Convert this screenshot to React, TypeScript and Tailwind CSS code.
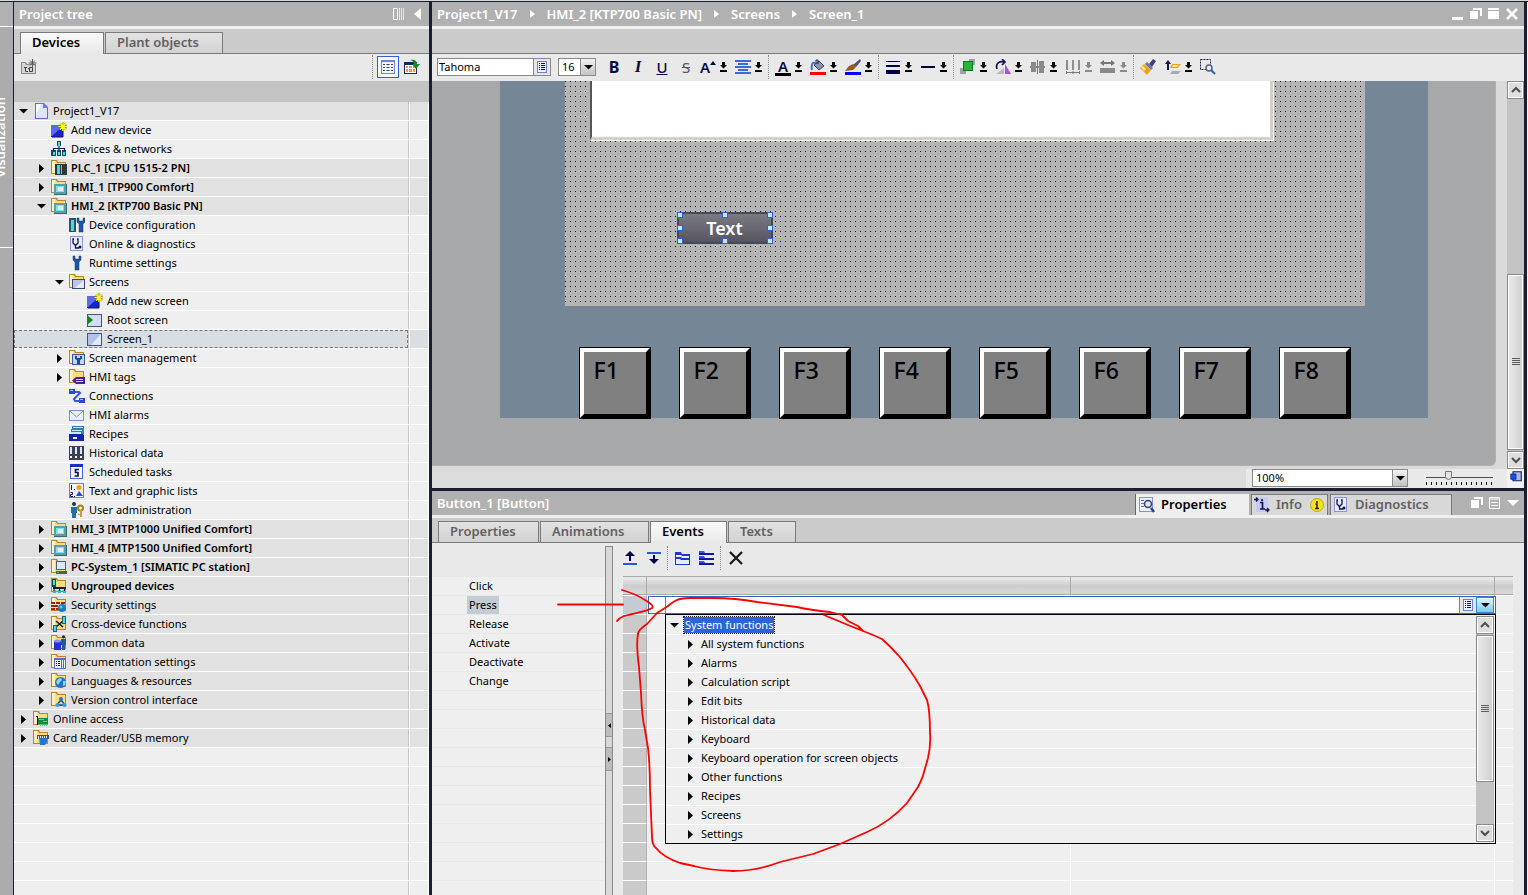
import { useState } from 'react'
import type { ReactNode } from 'react'
import clsx from 'clsx'

const folder = (
  <>
    <path d="M0 14V0h6l1 2h8v12z" fill="#b9852a" />
    <path d="M1 13V1h4l1 2h8v10z" fill="#fcdc80" />
    <path d="M1 13V1h3v12z" fill="#fff0bd" />
  </>
)

const sparkle = (
  <>
    <path d="M12 0v9M7.500 4.500h9M9 1.500l6 6M15 1.500l-6 6" stroke="#8a8800" strokeWidth="2" />
    <path d="M12 0v9M7.500 4.500h9M9 1.500l6 6M15 1.500l-6 6" stroke="#fffb2e" strokeWidth="1.200" />
  </>
)

const wrench = <path d="M4 1v4l2 2v8h4V7l2-2V1l-2 0v3H6V1z" fill="#1c56a8" stroke="#163a74" strokeWidth="0.5" />

const panel = (
  <>
    <path d="M3 5h13v11H3z" fill="#2e6f7a" />
    <path d="M3 5h12v10H3z" fill="#5f9ca8" />
    <path d="M5 7h8v6H5z" fill="#6deaf5" />
    <path d="M7 8h5v4H7z" fill="#e3f3ff" />
  </>
)

const stethoscope = (
  <>
    <path d="M1 0h13v15H1z" fill="#8796d8" />
    <path d="M2 1h11v13H2z" fill="#e6ebfd" />
    <path d="M5 3H4v4l2 2h1l2-2V3H8M6.500 9v3h3l1-1" fill="none" stroke="#11144f" strokeWidth="1.3" />
    <circle cx="11" cy="11" r="1.500" fill="#11144f" />
  </>
)

const ICONS: Record<string, ReactNode> = {
  project: (
    <>
      <path d="M2 0h9l4 4v12H2z" fill="#5e6fc9" />
      <path d="M3 1h7l4 4v10H3z" fill="#dfe6fb" />
      <path d="M3 1h5L3 12z" fill="#fff" />
      <path d="M10 0v5h5z" fill="#6d7fd6" />
    </>
  ),
  addNew: (
    <>
      <path d="M0 3h12v12H0z" fill="#1a22c9" />
      <path d="M0 3h12v1L1 14H0z" fill="#5a68f2" />
      <path d="M12 5v10H1" fill="none" stroke="#0a0d7d" />
      {sparkle}
    </>
  ),
  network: (
    <>
      <path d="M6 0h4v5H6zM0 9h5v6H0zM6 9h4v6H6zM11 9h4v6h-4z" fill="#23464f" />
      <path d="M7 1h2v4H7zM2 11h2v3H2zM7 11h2v3H7zM12 11h2v3h-2z" fill="#3fe0e6" />
      <path d="M8 5v4M2.500 10V7.500h11V10" fill="none" stroke="#10205e" strokeWidth="1.200" />
    </>
  ),
  plc: (
    <>
      {folder}
      <path d="M4 4h12v11H4z" fill="#29383f" />
      <path d="M6 5h3v9H6z" fill="#3fd6e0" />
      <path d="M10 5h1v9h-1z" fill="#9fb0b5" />
    </>
  ),
  hmi: (
    <>
      {folder}
      {panel}
    </>
  ),
  deviceConfig: (
    <>
      <path d="M0 1h7v14H0z" fill="#2b545c" />
      <path d="M2 3h3v11H2z" fill="#35e0ec" />
      <g transform="translate(4 0)">{wrench}</g>
    </>
  ),
  diagnostics: stethoscope,
  wrench,
  screens: (
    <>
      {folder}
      <path d="M3 5h13v10H3z" fill="#3b4a72" />
      <path d="M4 6h11v8H4z" fill="#b9c5ea" />
      <path d="M15 6v8H6z" fill="#e4eafb" />
    </>
  ),
  rootScreen: (
    <>
      <path d="M0 2h15v13H0z" fill="#46527a" />
      <path d="M1 3h13v11H1z" fill="#d5ddf5" />
      <path d="M0 3l6 5-6 5z" fill="#0f8a1c" />
    </>
  ),
  screen: (
    <>
      <path d="M0 2h15v13H0z" fill="#46527a" />
      <path d="M1 3h13v11H1z" fill="#b3c0ea" />
      <path d="M14 3v11H4z" fill="#e2e9fb" />
    </>
  ),
  screenMgmt: (
    <>
      {folder}
      <path d="M3 4h13v11H3z" fill="#3b5a9c" />
      <path d="M4 5h11v9H4z" fill="#c3d3f4" />
      <path d="M6 6v3l2 1v4h3v-4l2-1V6h-2v2H8V6z" fill="#1c4d9c" />
    </>
  ),
  tags: (
    <>
      {folder}
      <path d="M3 11.500l4-3.500h9v7H7z" fill="#4a1f9e" />
      <path d="M7 10.500h7M7 12.500h7" stroke="#d8c6ff" />
    </>
  ),
  connections: (
    <>
      <path d="M0 1h6v5H0zM10 10h6v5h-6z" fill="#2b48c8" />
      <path d="M6 4h4l1 1-6 6 1 2h5" fill="none" stroke="#3558dd" strokeWidth="2" />
      <path d="M1 2h3v1H1zM11 11h3v1h-3z" fill="#a8baff" />
    </>
  ),
  mail: (
    <>
      <path d="M0 3h15v11H0z" fill="#7e8fe0" />
      <path d="M1 4h13v9H1z" fill="#eaf0ff" />
      <path d="M1 4l6.500 6L14 4" fill="none" stroke="#7e8fe0" />
    </>
  ),
  recipes: (
    <>
      <path d="M3 0h12v8H3zM2 3h12v8H2z" fill="#2c7db8" />
      <path d="M4 1h10v1H4zM3 4h10v1H3zM2 6h10v2H2z" fill="#c5edfb" />
      <path d="M0 8h14l1 1v6H0z" fill="#1323b0" />
      <path d="M4 11h4v2H4z" fill="#fff" />
    </>
  ),
  history: (
    <>
      <path d="M0 1h5v14H0zM5 1h5v14H5zM10 1h5v14h-5z" fill="#3c3e54" />
      <path d="M1 2h2v7H1zM6 2h2v7H6zM11 2h2v7h-2z" fill="#dfe3f4" />
      <path d="M1 11h2v2H1zM6 11h2v2H6zM11 11h2v2h-2z" fill="#fff" />
    </>
  ),
  tasks: (
    <>
      <path d="M1 0h13v15H1z" fill="#5266d8" />
      <path d="M2 3h11v11H2z" fill="#f3f5ff" />
      <path d="M1 0h13v3H1z" fill="#1c2fc4" />
      <path d="M10 5.500H6.500v3H9v3.500H5.500" fill="none" stroke="#111450" strokeWidth="1.700" />
    </>
  ),
  lists: (
    <>
      <path d="M0 0h15v15H0z" fill="#6e7fd8" />
      <path d="M1 1h13v13H1z" fill="#eef2ff" />
      <path d="M2.500 2v5M1.500 9.500h2v2h-2v2h2.500M5 6.500h1M5 13.500h1" stroke="#14175a" fill="none" />
      <circle cx="10" cy="4.500" r="2.500" fill="#f29b18" />
      <path d="M7 13l3-5 4 5z" fill="#2a49c8" />
    </>
  ),
  users: (
    <>
      <circle cx="5" cy="2" r="2" fill="#26333f" />
      <path d="M2 5h6v6H7v5H3v-5H2z" fill="#2a6ba8" />
      <circle cx="11.500" cy="6" r="2.500" fill="none" stroke="#a4821a" strokeWidth="2" />
      <path d="M11 8h2v7h-2zM9 12h2v1H9z" fill="#c9a126" />
    </>
  ),
  pc: (
    <>
      {folder}
      <path d="M5 2h10v9H5z" fill="#4e5f7f" />
      <path d="M6 3h8v7H6z" fill="#dde6fa" />
      <path d="M5 12h11v3H5z" fill="#515a66" />
      <path d="M6 13h2v1H6z" fill="#2ddb4a" />
    </>
  ),
  ungrouped: (
    <>
      {folder}
      <path d="M1 1h4v8H1z" fill="#23464f" />
      <path d="M2 2h2v5H2z" fill="#3fe0e6" />
      <path d="M2 9h13v2H2z" fill="#12174f" />
      <path d="M2 12h3v3H2zM7 12h3v3H7zM12 12h3v3h-3z" fill="#37b9c2" />
      <path d="M3 11v2M8.500 11v2M13.500 11v2" stroke="#12174f" />
    </>
  ),
  security: (
    <>
      {folder}
      <path d="M0 5h14v8H0z" fill="#a81f16" />
      <path d="M0 7.500h14M0 10.500h14M4.500 5v3M9.500 5v3M7.500 8v3M4.500 11v2" stroke="#f3dcd2" />
      <circle cx="11" cy="11" r="4" fill="#1c7ac4" />
      <circle cx="10" cy="10" r="1.500" fill="#6cbcf0" />
    </>
  ),
  cross: (
    <>
      {folder}
      <path d="M5 5l7 6M12 5l-7 6" stroke="#111450" strokeWidth="1.600" />
      <path d="M11 0h4v8h-4zM2 9h4v7H2z" fill="#23616b" />
      <path d="M12 1h2v6h-2zM3 10h2v5H3z" fill="#46dbe4" />
    </>
  ),
  common: (
    <>
      {folder}
      <path d="M3 6h7v9H3z" fill="#2036d2" />
      <ellipse cx="6.500" cy="6" rx="3.500" ry="1.500" fill="#8294ff" />
      <circle cx="12.500" cy="1.800" r="1.600" fill="#1d2c44" />
      <path d="M10 4h5v6h-1v5h-3v-5h-1z" fill="#225a96" />
    </>
  ),
  docs: (
    <>
      {folder}
      <path d="M3 4h12v11H3z" fill="#5a6bd0" />
      <path d="M4 6h6v8H4zM11 6h1v8h-1zM13 6h1v8h-1z" fill="#f1f4ff" />
      <path d="M5 7.500h1M7 7.500h2M5 9.500h1M7 9.500h2M5 11.500h1M7 11.500h2" stroke="#14175a" />
    </>
  ),
  languages: (
    <>
      {folder}
      <circle cx="9.500" cy="9.500" r="5.500" fill="#1f74c9" />
      <path d="M7 6l3-1 1 2-2 2-2 3-2-3zM12 8l3 0-1 4-2 1z" fill="#8fd8e8" />
    </>
  ),
  version: (
    <>
      {folder}
      <path d="M10 8l-4 5h8z" fill="none" stroke="#1b4a91" strokeWidth="1.500" />
      <circle cx="10" cy="7" r="2" fill="#2f72c4" />
      <circle cx="6.500" cy="13" r="2" fill="#3f9ae0" />
      <circle cx="13.500" cy="13" r="2" fill="#3f9ae0" />
    </>
  ),
  online: (
    <>
      {folder}
      <path d="M3 5h2v9H4V6H3z" fill="#112233" />
      <path d="M5 7h10v6H5z" fill="#128a45" />
      <path d="M7.500 13v2M9.500 13v2M11.500 13v2M13.500 13v2M6 8.500h5M10 10.500h4" stroke="#59d58a" />
    </>
  ),
  card: (
    <>
      {folder}
      <path d="M4 5h12v4H4z" fill="#40525f" />
      <path d="M5.500 6v3M7.500 6v3M9.500 6v3M11.500 6v3M13.500 6v3" stroke="#e2e8ec" />
      <path d="M6 8h8v4l-2 3H7z" fill="#1b79d4" />
    </>
  ),
}

type Node = { label: string; icon: string; level: number; state?: 'open' | 'closed'; bold?: boolean; shade?: boolean }

const TREE: Node[] = [
  { label: 'Project1_V17', icon: 'project', level: 0, state: 'open', shade: true },
  { label: 'Add new device', icon: 'addNew', level: 1 },
  { label: 'Devices & networks', icon: 'network', level: 1 },
  { label: 'PLC_1 [CPU 1515-2 PN]', icon: 'plc', level: 1, state: 'closed', bold: true, shade: true },
  { label: 'HMI_1 [TP900 Comfort]', icon: 'hmi', level: 1, state: 'closed', bold: true, shade: true },
  { label: 'HMI_2 [KTP700 Basic PN]', icon: 'hmi', level: 1, state: 'open', bold: true, shade: true },
  { label: 'Device configuration', icon: 'deviceConfig', level: 2 },
  { label: 'Online & diagnostics', icon: 'diagnostics', level: 2 },
  { label: 'Runtime settings', icon: 'wrench', level: 2 },
  { label: 'Screens', icon: 'screens', level: 2, state: 'open' },
  { label: 'Add new screen', icon: 'addNew', level: 3 },
  { label: 'Root screen', icon: 'rootScreen', level: 3 },
  { label: 'Screen_1', icon: 'screen', level: 3 },
  { label: 'Screen management', icon: 'screenMgmt', level: 2, state: 'closed' },
  { label: 'HMI tags', icon: 'tags', level: 2, state: 'closed' },
  { label: 'Connections', icon: 'connections', level: 2 },
  { label: 'HMI alarms', icon: 'mail', level: 2 },
  { label: 'Recipes', icon: 'recipes', level: 2 },
  { label: 'Historical data', icon: 'history', level: 2 },
  { label: 'Scheduled tasks', icon: 'tasks', level: 2 },
  { label: 'Text and graphic lists', icon: 'lists', level: 2 },
  { label: 'User administration', icon: 'users', level: 2 },
  { label: 'HMI_3 [MTP1000 Unified Comfort]', icon: 'hmi', level: 1, state: 'closed', bold: true, shade: true },
  { label: 'HMI_4 [MTP1500 Unified Comfort]', icon: 'hmi', level: 1, state: 'closed', bold: true, shade: true },
  { label: 'PC-System_1 [SIMATIC PC station]', icon: 'pc', level: 1, state: 'closed', bold: true, shade: true },
  { label: 'Ungrouped devices', icon: 'ungrouped', level: 1, state: 'closed', bold: true, shade: true },
  { label: 'Security settings', icon: 'security', level: 1, state: 'closed', shade: true },
  { label: 'Cross-device functions', icon: 'cross', level: 1, state: 'closed', shade: true },
  { label: 'Common data', icon: 'common', level: 1, state: 'closed', shade: true },
  { label: 'Documentation settings', icon: 'docs', level: 1, state: 'closed', shade: true },
  { label: 'Languages & resources', icon: 'languages', level: 1, state: 'closed', shade: true },
  { label: 'Version control interface', icon: 'version', level: 1, state: 'closed', shade: true },
  { label: 'Online access', icon: 'online', level: 0, state: 'closed', shade: true },
  { label: 'Card Reader/USB memory', icon: 'card', level: 0, state: 'closed', shade: true },
]

const INDENT = ['pl-px', 'pl-[19px]', 'pl-[37px]', 'pl-[55px]']
const KEYS = ['F1', 'F2', 'F3', 'F4', 'F5', 'F6', 'F7', 'F8']
const EVENTS = ['Click', 'Press', 'Release', 'Activate', 'Deactivate', 'Change']
const FUNCTIONS = [
  'All system functions',
  'Alarms',
  'Calculation script',
  'Edit bits',
  'Historical data',
  'Keyboard',
  'Keyboard operation for screen objects',
  'Other functions',
  'Recipes',
  'Screens',
  'Settings',
]
const HANDLES = [
  'left-0 top-0',
  'left-[45px] top-0',
  'right-0 top-0',
  'left-0 top-[13px]',
  'right-0 top-[13px]',
  'left-0 bottom-0',
  'left-[45px] bottom-0',
  'right-0 bottom-0',
]

function Icon({ children, className = 'h-4 w-4' }: { children: ReactNode; className?: string }) {
  return (
    <svg className={clsx('block shrink-0', className)} viewBox="0 0 16 16" fill="none" aria-hidden="true">
      {children}
    </svg>
  )
}

function Caret({ state }: { state?: 'open' | 'closed' }) {
  return (
    <svg className="h-[9px] w-[9px]" viewBox="0 0 9 9" fill="#000" aria-hidden="true">
      {state === 'open' ? <path d="M0 2h9L4.500 6.500z" /> : <path d="M2 0v9l5-4.500z" />}
    </svg>
  )
}

function ListIcon() {
  return (
    <svg className="h-3 w-[10px]" viewBox="0 0 10 12" aria-hidden="true">
      <path d="M0 0h10v12H0z" fill="#6d7fd8" />
      <path d="M1 1h8v10H1z" fill="#eef1ff" />
      <path d="M2 2.500h1M4 2.500h4M2 4.500h1M4 4.500h4M2 6.500h1M4 6.500h4M2 8.500h1M4 8.500h4" stroke="#11144f" />
    </svg>
  )
}

function Tab({ children, active, className }: { children: ReactNode; active?: boolean; className?: string }) {
  return (
    <button
      type="button"
      role="tab"
      aria-selected={!!active}
      className={clsx(
        'border border-b-0 border-[#7a7a7a] pl-[11px] text-left text-[13px] leading-[18px] font-semibold whitespace-nowrap',
        active
          ? '-mb-px h-[22px] bg-linear-to-b from-[#fafafa] to-[#e9e9e9] pb-[3px] text-black'
          : 'h-[21px] bg-linear-to-b from-[#e2e2e2] to-[#d2d2d2] pb-0.5 text-[#616161]',
        className,
      )}
    >
      {children}
    </button>
  )
}

function ScrollButton({ dir }: { dir: 'up' | 'down' }) {
  return (
    <button
      type="button"
      aria-label={dir === 'up' ? 'Scroll up' : 'Scroll down'}
      className="flex h-[18px] w-full shrink-0 items-center justify-center border border-[#8a8a8a] bg-[#dedede] shadow-[inset_0_0_0_1px_#fff]"
    >
      <svg className="h-2 w-3" viewBox="0 0 12 8" fill="none" stroke="#4d4d4d" strokeWidth="2">
        {dir === 'up' ? <path d="M2 6l4-4 4 4" /> : <path d="M2 2l4 4 4-4" />}
      </svg>
    </button>
  )
}

function Thumb({ className }: { className: string }) {
  return (
    <div
      className={clsx(
        'flex w-full shrink-0 items-center justify-center border border-[#8a8a8a] bg-linear-to-r from-[#ebebeb] to-[#cfcfcf] shadow-[inset_0_0_0_1px_#fff]',
        className,
      )}
    >
      <div className="h-2 w-2 bg-[repeating-linear-gradient(#5c5c5c_0_1px,transparent_1px_2px)]" />
    </div>
  )
}

function Tool({ label, children, className = 'w-5' }: { label: string; children: ReactNode; className?: string }) {
  return (
    <button type="button" aria-label={label} className={clsx('flex h-5 shrink-0 items-center justify-center', className)}>
      {children}
    </button>
  )
}

function SplitTool({ label, children, disabled }: { label: string; children: ReactNode; disabled?: boolean }) {
  return (
    <div className="flex shrink-0">
      <Tool label={label}>{children}</Tool>
      <button type="button" aria-label={label + ' options'} className="flex h-5 w-[10px] items-center justify-center">
        <svg className="h-[10px] w-[7px]" viewBox="0 0 7 10" fill={disabled ? '#8a8a8a' : '#000'}>
          <path d="M2 0h3v3h2L3.500 6.500 0 3h2zM0 8h7v2H0z" />
        </svg>
      </button>
    </div>
  )
}

function ToolGroup({ children }: { children: ReactNode }) {
  return <div className="flex h-6 items-center gap-[5px] border-l border-dotted border-[#8a8a8a] pr-[5px] pl-1">{children}</div>
}

function SelectArrow() {
  return (
    <span className="pointer-events-none absolute inset-y-px right-px flex w-[15px] items-center justify-center border-l border-[#8a8a8a] bg-linear-to-b from-[#f2f2f2] to-[#c4c4c4]">
      <Caret state="open" />
    </span>
  )
}

function ProjectTree() {
  const [selected, setSelected] = useState('Screen_1')

  return (
    <aside className="flex w-[415px] shrink-0 flex-col overflow-hidden">
      <header className="flex h-6 shrink-0 items-center justify-between bg-[#b1b1b1] pr-2 pl-[5px]">
        <h2 className="text-[13px] leading-6 font-semibold text-white">Project tree</h2>
        <div className="flex items-center gap-[9px]">
          <svg className="h-3 w-3" viewBox="0 0 12 12" fill="none">
            <path d="M.5.500h4v11h-4z" stroke="#fff" />
            <path d="M6.500 0v12M8.500 0v12M10.500 0v12" stroke="#e6e6e6" />
          </svg>
          <svg className="h-3 w-[7px]" viewBox="0 0 7 12" fill="#fff">
            <path d="M7 0v12L0 6z" />
          </svg>
        </div>
      </header>
      <div role="tablist" className="flex h-7 shrink-0 items-end gap-px border-t-3 border-b border-t-[#f0f0f0] border-b-[#7a7a7a] bg-[#cbcbcb] pl-1.5">
        <Tab active className="w-[84px]">Devices</Tab>
        <Tab className="w-[118px]">Plant objects</Tab>
      </div>
      <div className="flex h-[27px] shrink-0 items-center bg-[#e9e9e9] pr-2 pb-px pl-[5px]">
        <Tool label="Add new group">
          <Icon>
            <path d="M0 15V3h5l1 2h9v10z" fill="#8a8a8a" />
            <path d="M1 14V4h3l1 2h9v8z" fill="#d6d6d6" />
            <path d="M3 8.500h3M4.500 8v4.500H7M7 9.500h2M8.500 8.500h3v4h-3z" stroke="#444" />
            <path d="M11.500 0v8M7.500 4h8M9 1.500l5 5M14 1.500l-5 5" stroke="#5b5b5b" />
          </Icon>
        </Tool>
        <div className="ml-auto h-6 border-l border-dotted border-[#8a8a8a]" />
        <button type="button" aria-label="Details view" className="ml-1 flex h-[22px] w-[22px] items-center justify-center border border-[#2f5fd0] bg-[#f6f8ff]">
          <Icon>
            <path d="M1 1h14v14H1z" fill="#7284d8" />
            <path d="M2 3h12v11H2z" fill="#f3f5ff" />
            <path d="M3 5.500h2M6.500 5.500h3M11 5.500h2M3 8.500h2M6.500 8.500h3M11 8.500h2M3 11.500h2M6.500 11.500h3M11 11.500h2" stroke="#3a4157" />
          </Icon>
        </button>
        <button type="button" aria-label="Open overview" className="ml-1 flex h-[22px] w-[18px] items-center justify-center">
          <Icon>
            <path d="M0 3h13v12H0z" fill="#14296b" />
            <path d="M1 6h11v8H1z" fill="#fff" />
            <path d="M2 7h2v2H2zM5 7h3v2H5zM9 7h2v2H9zM2 10h2v3H2zM5 10h3v3H5zM9 10h2v3H9z" fill="#ef9a2c" />
            <path d="M6 1c5-1 7 1 7 4h3l-4 5-4-5h2c0-2-1-3-4-4z" fill="#118a2b" />
          </Icon>
        </button>
      </div>
      <div className="h-[21px] shrink-0 bg-[#c3c3c3]" />
      <ul role="tree" className="min-h-0 flex-1 overflow-hidden bg-[#efefef]">
        {TREE.map((node) => {
          const isSelected = node.label === selected
          return (
            <li
              key={node.label}
              role="treeitem"
              aria-selected={isSelected}
              onClick={() => setSelected(node.label)}
              className={clsx('flex h-[19px] border-b border-white', isSelected ? 'bg-[#d8dee2]' : node.shade ? 'bg-[#e1e1e1]' : 'bg-[#efefef]')}
            >
              <div
                className={clsx(
                  'flex flex-1 items-center text-[11px] leading-[18px] whitespace-nowrap text-black',
                  INDENT[node.level],
                  node.bold && 'font-semibold',
                  isSelected && 'outline-1 -outline-offset-1 outline-[#777] outline-dashed',
                )}
              >
                <span className="mr-0.5 flex w-4 justify-center">{node.state && <Caret state={node.state} />}</span>
                <Icon>{ICONS[node.icon]}</Icon>
                <span className="pl-1">{node.label}</span>
              </div>
              <div className="w-[21px] border-l border-[#c6c6c6] shadow-[inset_1px_0_0_#fff,inset_-1px_0_0_#fff]" />
            </li>
          )
        })}
        {Array.from({ length: 10 }, (_, i) => (
          <li key={i} aria-hidden="true" className="flex h-[19px] border-b border-white">
            <div className="ml-auto w-[21px] border-l border-[#c6c6c6] shadow-[inset_1px_0_0_#fff,inset_-1px_0_0_#fff]" />
          </li>
        ))}
      </ul>
    </aside>
  )
}

function FormatBar() {
  return (
    <div className="flex h-[27px] shrink-0 items-center overflow-hidden bg-[#e9e9e9] pb-px pl-[5px]">
      <div className="flex h-[18px] w-[114px] shrink-0 border border-[#8a8a8a] bg-white">
        <input aria-label="Font" defaultValue="Tahoma" className="min-w-0 flex-1 pl-px text-[11px] leading-4 outline-none" />
        <button type="button" aria-label="Choose font" className="flex w-[17px] items-center justify-center border-l border-[#8a8a8a] bg-[#e6e6e6]">
          <ListIcon />
        </button>
      </div>
      <div className="relative mr-1.5 ml-[7px] h-[18px] w-[38px] shrink-0">
        <select aria-label="Font size" defaultValue="16" className="block h-full w-full appearance-none border border-[#8a8a8a] bg-white pl-[3px] text-[11px] leading-4">
          <option>16</option>
          <option>18</option>
        </select>
        <SelectArrow />
      </div>
      <Tool label="Bold" className="w-6"><span className="text-[16px] leading-5 font-bold text-[#0a0a4a]">B</span></Tool>
      <Tool label="Italic" className="w-6"><span className="font-['Liberation_Serif',serif] text-[17px] leading-5 font-bold text-[#0a0a4a] italic">I</span></Tool>
      <Tool label="Underline" className="w-6"><span className="text-[15px] leading-5 font-medium text-[#0a0a4a] underline">U</span></Tool>
      <Tool label="Strikethrough" className="w-6"><span className="text-[15px] leading-5 text-[#555] line-through">S</span></Tool>
      <div className="flex items-center gap-[5px] pr-[5px]">
        <SplitTool label="Increase font size">
          <span className="text-[15px] leading-5 font-semibold text-[#0a0a4a]">A</span>
          <svg className="mb-2 h-1 w-[6px]" viewBox="0 0 6 4" fill="#0a0a4a"><path d="M3 0l3 4H0z" /></svg>
        </SplitTool>
        <SplitTool label="Align">
          <Icon><path d="M0 1h16v2H0zM3 4h10v2H3zM0 7h16v2H0zM3 10h10v2H3zM0 13h16v2H0z" fill="#3f66e6" /></Icon>
        </SplitTool>
      </div>
      <ToolGroup>
        <SplitTool label="Text color">
          <span className="border-b-3 border-black px-[3px] text-[15px] leading-[14px] font-semibold text-[#0a0a4a]">A</span>
        </SplitTool>
        <SplitTool label="Fill color">
          <Icon>
            <path d="M4 6l5-4 5 5-5 4z" fill="#8d93b3" stroke="#3a3f63" />
            <path d="M6 5V1h2v4" stroke="#20254f" />
            <path d="M5 4C2 3 1 6 2 11" stroke="#3d6fe8" strokeWidth="2" />
            <path d="M0 13h16v3H0z" fill="red" />
          </Icon>
        </SplitTool>
        <SplitTool label="Border color">
          <Icon>
            <path d="M15 0l1 2-5 6-3-2z" fill="#4e5278" />
            <path d="M8 5l3 3-3 3-8 1 4-5z" fill="#9a5b22" />
            <path d="M0 13h16v3H0z" fill="#00f" />
          </Icon>
        </SplitTool>
      </ToolGroup>
      <ToolGroup>
        <SplitTool label="Line width">
          <Icon><path d="M1 2h14v1H1zM1 6h14v2H1zM1 11h14v4H1z" fill="#00004a" /></Icon>
        </SplitTool>
        <SplitTool label="Line style">
          <Icon><path d="M1 7h14v2H1z" fill="#00004a" /></Icon>
        </SplitTool>
      </ToolGroup>
      <ToolGroup>
        <SplitTool label="Arrange">
          <Icon>
            <path d="M9 0h6v6H9zM0 9h6v6H0z" fill="#9da3a3" />
            <path d="M3 2h10v10H3z" fill="#0c7a22" />
            <path d="M4 3h8v8H4z" fill="#25b53b" />
          </Icon>
        </SplitTool>
        <SplitTool label="Rotate">
          <Icon>
            <path d="M1 15l8-6v6z" fill="#b8b8b8" />
            <path d="M10 5l6 10h-6z" fill="#b04be8" />
            <path d="M2 10C0 4 5 2 9 3M7 0l3 3-3 3" stroke="#11144f" strokeWidth="1.700" />
          </Icon>
        </SplitTool>
        <SplitTool label="Align objects">
          <Icon><path d="M1 3h5v10H1zM9 2h5v12H9zM0 7h15v2H0z" fill="#8a8a8a" /><path d="M7.500 1v14" stroke="#777" /></Icon>
        </SplitTool>
        <SplitTool label="Distribute" disabled>
          <Icon><path d="M1 1h2v10H1zM7 1h2v10H7zM13 1h2v10h-2z" fill="#8e8e8e" /><path d="M1 13.500h14M1.500 12v3M8 12v3M14.500 12v3" stroke="#777" /></Icon>
        </SplitTool>
        <SplitTool label="Same width" disabled>
          <Icon><path d="M0 9h15v5H0z" fill="#8a8a8a" /><path d="M0 4l4-3v2h7V1l4 3-4 3V5H4v2z" fill="#777" /></Icon>
        </SplitTool>
      </ToolGroup>
      <ToolGroup>
        <Tool label="Format painter">
          <Icon>
            <path d="M13 0l3 2-4 6-3-3z" fill="#3b4370" />
            <path d="M7 3l6 6-2 2-6-6z" fill="#6e76a8" />
            <path d="M4 5l7 6-4 5-7-7z" fill="#f0a01e" />
            <path d="M3 7l3 3-2 2-3-4z" fill="#ffe98a" />
          </Icon>
        </Tool>
        <SplitTool label="Layers">
          <Icon>
            <path d="M3 11V3" stroke="#11144f" strokeWidth="2" />
            <path d="M0 5l3-4 3 4z" fill="#11144f" />
            <path d="M7 5h9l-3 4H5z" fill="#e8a62e" />
            <path d="M8 6h6l-2 2H7z" fill="#ffe69a" />
            <path d="M7 12h9l-3 3H5z" fill="#a3acb5" />
          </Icon>
        </SplitTool>
        <Tool label="Zoom selection">
          <Icon>
            <path d="M.5.500h10v10H.5z" stroke="#11144f" strokeDasharray="2 1" />
            <circle cx="9" cy="9" r="3" fill="#e6ecfa" stroke="#5a5f80" strokeWidth="1.500" />
            <path d="M11 11l4 4" stroke="#2c62b8" strokeWidth="2.200" />
          </Icon>
        </Tool>
      </ToolGroup>
    </div>
  )
}

function ScreenEditor() {
  return (
    <section className="flex shrink-0 flex-col">
      <header className="flex h-6 shrink-0 items-center bg-[#b1b1b1] pr-1.5 pl-[5px]">
        <nav className="flex items-center gap-3 text-[13px] leading-6 font-semibold text-white">
          {['Project1_V17', 'HMI_2 [KTP700 Basic PN]', 'Screens', 'Screen_1'].map((crumb, i) => (
            <span key={crumb} className="flex items-center gap-3">
              {i > 0 && (
                <svg className="h-2 w-[5px]" viewBox="0 0 5 8" fill="#fff"><path d="M0 0v8l5-4z" /></svg>
              )}
              <a href="#">{crumb}</a>
            </span>
          ))}
        </nav>
        <div className="ml-auto flex items-center gap-1.5">
          <button type="button" aria-label="Minimize"><svg className="h-3 w-3" viewBox="0 0 12 12" fill="#fff"><path d="M0 9h11v3H0z" /></svg></button>
          <button type="button" aria-label="Float"><svg className="h-3 w-3" viewBox="0 0 12 12" fill="#fff"><path d="M0 3h8v8H0zM3 0h9v8h-2V2H3z" /></svg></button>
          <button type="button" aria-label="Maximize"><svg className="h-3 w-3" viewBox="0 0 12 12" fill="#fff"><path d="M0 0h11v2H0zM0 3h11v8H0z" /></svg></button>
          <button type="button" aria-label="Close"><svg className="h-3 w-3" viewBox="0 0 12 12" stroke="#fff" strokeWidth="2.500"><path d="M1 1l10 10M11 1L1 11" /></svg></button>
        </div>
      </header>
      <div className="h-7 shrink-0 border-t-3 border-b border-t-[#f0f0f0] border-b-[#7a7a7a] bg-[#cbcbcb]" />
      <FormatBar />
      <div className="flex bg-[#dadada]">
        <div className="mb-[3px] min-w-0 flex-1 overflow-hidden rounded-br-md border-r border-b border-[#b0b0b0] bg-[#a7a8aa] pb-[47px]">
          <div className="mx-auto w-[928px] bg-[#758696]">
            {/* visible part of the HMI screen, 5px snap grid */}
            <div className="relative ml-[65px] h-[225px] w-[800px] bg-[#b4b4b4] bg-[conic-gradient(from_270deg_at_1px_1px,#000_90deg,transparent_0)] bg-[size:5px_5px]">
              <div className="absolute top-0 left-[25px] h-[59px] w-[683px] border-r-3 border-b-3 border-l-2 border-r-[#d4d0c8] border-b-[#d4d0c8] border-l-[#555] bg-white shadow-[1px_1px_0_#fff]" />
              <div className="absolute top-[131px] left-28 flex h-8 w-24 items-center justify-center border-2 border-[#454952] bg-linear-to-b from-[#7b7b82] to-[#565462]">
                <span className="text-[18px] leading-6 font-semibold text-white">Text</span>
                <div className="absolute -inset-0.5">
                  {HANDLES.map((pos) => (
                    <span key={pos} className={clsx('absolute h-1.5 w-1.5 border border-[#2f62d9] bg-[#c2e8fb]', pos)} />
                  ))}
                </div>
              </div>
            </div>
            <div className="flex gap-7 pt-[41px] pl-[79px]">
              {KEYS.map((key) => (
                <button key={key} type="button" className="-mb-px h-[72px] w-[72px] border border-black bg-black">
                  <span className="block h-full border-4 border-t-white border-r-black border-b-black border-l-white bg-[#808080] pt-[3px] pl-[10px] text-left text-[23px] leading-[30px] font-medium text-black">
                    {key}
                  </span>
                </button>
              ))}
            </div>
          </div>
        </div>
        <div className="ml-[11px] flex w-[17px] shrink-0 flex-col bg-[#c3c3c3]">
          <ScrollButton dir="up" />
          <Thumb className="mt-auto mb-px h-44" />
          <ScrollButton dir="down" />
        </div>
      </div>
      <div className="flex h-[19px] shrink-0 bg-[#dcdcdc]">
        <div className="ml-auto flex items-start bg-[#e9e9e9] pl-1.5">
          <div className="relative h-[18px] w-[156px]">
            <select aria-label="Zoom" defaultValue="100%" className="block h-full w-full appearance-none border border-[#8a8a8a] bg-white pl-[3px] text-[11px] leading-4">
              <option>100%</option>
              <option>200%</option>
            </select>
            <SelectArrow />
          </div>
          <div className="ml-[18px] w-[67px]">
            <input
              type="range"
              aria-label="Zoom level"
              defaultValue={31}
              className="block h-[13px] w-full appearance-none bg-[linear-gradient(#4d4d4d,#4d4d4d)] bg-[size:100%_1px] bg-[position:0_8px] bg-no-repeat [&::-webkit-slider-thumb]:h-[9px] [&::-webkit-slider-thumb]:w-[7px] [&::-webkit-slider-thumb]:appearance-none [&::-webkit-slider-thumb]:rounded-b-full [&::-webkit-slider-thumb]:border [&::-webkit-slider-thumb]:border-[#777] [&::-webkit-slider-thumb]:bg-[#e4e4e4]"
            />
            <div className="h-[3px] bg-[repeating-linear-gradient(90deg,#111_0_1px,transparent_1px_5px)]" />
          </div>
          <div className="ml-[14px] flex h-full w-[17px] items-start justify-center bg-[#f2f2f2] pt-0.5">
            <Icon className="h-3 w-3">
              <path d="M4 1h11v12H4z" fill="#a9b6ea" stroke="#14205e" strokeWidth="1.500" />
              <path d="M1 4h7v7H1z" fill="#1d4df0" stroke="#0b1f8a" />
            </Icon>
          </div>
        </div>
      </div>
    </section>
  )
}

function EventList() {
  const [current, setCurrent] = useState('Press')

  return (
    <div className="w-[173px] shrink-0 bg-[#e9e9e9] pt-[34px]">
      <ul className="h-full bg-[#efefef]">
        {EVENTS.map((name) => (
          <li key={name} className="h-[19px] border-b border-[#e8e8e8] pl-[35px]">
            <button
              type="button"
              onClick={() => setCurrent(name)}
              className={clsx('block h-[18px] px-0.5 text-[11px] leading-[18px]', current === name && 'bg-[#c3ccd5]')}
            >
              {name}
            </button>
          </li>
        ))}
        {Array.from({ length: 11 }, (_, i) => (
          <li key={i} aria-hidden="true" className="h-[19px] border-b border-[#e8e8e8]" />
        ))}
      </ul>
    </div>
  )
}

function FunctionDropdown() {
  return (
    <div className="absolute top-[18px] left-[42px] z-10 flex h-[230px] w-[831px] overflow-hidden border border-black bg-[#efefef] pt-px">
      <ul role="tree" className="flex-1 text-[11px] leading-[18px]">
        <li className="flex h-[19px] items-center border-b border-white pl-1">
          <Caret state="open" />
          <span className="ml-[5px] bg-[#2f62d9] px-px leading-4 text-white outline-1 outline-[#111] outline-dotted">System functions</span>
        </li>
        {FUNCTIONS.map((name) => (
          <li key={name} className="flex h-[19px] items-center border-b border-white pl-5">
            <Caret state="closed" />
            <span className="ml-1.5">{name}</span>
          </li>
        ))}
      </ul>
      <div className="mr-px flex h-[226px] w-[18px] flex-col bg-[#c3c3c3]">
        <ScrollButton dir="up" />
        <Thumb className="mt-px h-[147px]" />
        <div className="flex-1" />
        <ScrollButton dir="down" />
      </div>
    </div>
  )
}

function FunctionTable() {
  const head = 'h-5 border-t border-b border-t-[#a9a9a9] border-b-white bg-linear-to-b from-[#ececec] via-[#cccccc] to-[#dadada] p-0 shadow-[inset_0_-1px_0_#a9a9a9]'
  return (
    <div className="relative mr-[11px] flex-1 overflow-hidden bg-[#efefef]">
      <table className="w-full table-fixed border-separate border-spacing-0">
        <thead>
          <tr>
            <th aria-label="Row" className={clsx(head, 'w-6 border-r border-r-[#a9a9a9]')} />
            <th aria-label="Function" className={clsx(head, 'border-r border-r-[#a9a9a9]')} />
            <th aria-label="Value" className={clsx(head, 'border-r border-r-[#a9a9a9]')} />
            <th aria-label="More" className={clsx(head, 'w-[18px]')} />
          </tr>
        </thead>
        <tbody>
          {Array.from({ length: 16 }, (_, i) => (
            <tr key={i}>
              <td className={clsx('h-[19px] border-r border-b border-r-[#b0b0b0] border-b-white p-0', i === 0 ? 'bg-[#c3ccd5]' : 'bg-[#cacaca]')} />
              <td className="border-r border-b border-white p-0" />
              <td className="border-r border-b border-white p-0" />
              <td className="border-b border-white p-0" />
            </tr>
          ))}
        </tbody>
      </table>
      <div className="absolute top-5 right-0 left-0">
        <div className="absolute top-0 left-[25px] flex h-[18px] w-[848px] border border-[#3a62c4] bg-white">
          <div className="w-4" />
          <input aria-label="Function" className="min-w-0 flex-1 border-l border-[#6e84bd] outline-none" />
          <button type="button" aria-label="Function list" className="flex w-[17px] items-center justify-center border-l border-[#6e84bd] bg-[#e6e6e6]">
            <ListIcon />
          </button>
          <button type="button" aria-label="Open list" className="mr-px flex w-[18px] items-center justify-center border border-[#2b8fd0] bg-linear-to-b from-[#e0f5fd] to-[#7cc9ee]">
            <Caret state="open" />
          </button>
        </div>
        <FunctionDropdown />
      </div>
    </div>
  )
}

function Annotation() {
  return (
    <svg className="pointer-events-none absolute top-[37px] left-[118px] z-20 h-[300px] w-[390px]" viewBox="550 580 390 300" fill="none" stroke="#f00" strokeWidth="1.800" strokeLinejoin="round" strokeLinecap="round" aria-hidden="true">
      <path d="M558 604.500H623" />
      <path d="M622 590Q636 594 645 600Q655 606 652 608C646 612 634 613 624 616Q619 618 617 621" />
      <path d="M863 631L858 626L848 621L842 615L830 612Q810 610 797 607L757 602Q735 598 713 598H690Q680 598 675 601Q670 604 668 606L657 613L647 624Q638 630 638 634Q636 645 639 667L641 693Q642 718 645 730L648 748Q650 765 650 790L652 837Q652 845 656 848Q663 857 680 863L694 866Q707 870 733 871Q757 871 780 862L813 854L840 844L867 832Q890 822 907 803L918 787Q923 777 924 772L928 758Q931 745 930 733Q930 710 927 700L920 686Q912 672 899 656Q890 646 882 639L873 635L863 631L848 625L824 615" />
    </svg>
  )
}

function Inspector() {
  return (
    <section className="flex min-h-0 flex-1 flex-col border-t-3 border-[#1a1e31]">
      <header className="flex h-6 shrink-0 items-end bg-[#b1b1b1] pr-[5px] pl-[5px]">
        <h2 className="text-[13px] leading-6 font-semibold text-white">Button_1 [Button]</h2>
        <div role="tablist" className="ml-auto flex items-end gap-0.5 text-[13px] font-semibold">
          <button type="button" role="tab" aria-selected="true" className="flex h-[21px] w-[114px] items-center gap-1.5 border-l border-[#666] bg-[#efefef] pl-[3px] text-black">
            <Icon>
              <path d="M0 0h14v15H0z" fill="#8492df" />
              <path d="M1 1h12v13H1z" fill="#eef1ff" />
              <path d="M2 3.500h3M2 6.500h3M2 9.500h3" stroke="#66708f" />
              <circle cx="9" cy="7" r="3.500" fill="#dce6fb" stroke="#3a3f63" strokeWidth="1.500" />
              <path d="M12 11l3 4" stroke="#234a8c" strokeWidth="2.500" />
            </Icon>
            Properties
          </button>
          <button type="button" role="tab" aria-selected="false" className="flex h-[21px] w-[77px] items-center gap-1.5 border border-b-0 border-[#7a7a7a] bg-[#d8d8d8] pl-0.5 text-[#616161]">
            <Icon>
              <path d="M2 0h12v15H2z" fill="#c3ccf3" />
              <path d="M6 5.500h2.500v6M6 12h5M8 2v2" stroke="#11144f" strokeWidth="1.700" />
              <path d="M0 2.500h3M2 .5l2 2-2 2M11 13h3M13 11l2 2-2 2" stroke="#11144f" strokeWidth="1.300" />
            </Icon>
            Info
            <svg className="ml-0.5 h-3.5 w-3.5" viewBox="0 0 14 14">
              <circle cx="7" cy="7" r="6.500" fill="#f7e21b" stroke="#c9a800" />
              <path d="M5.500 6H7v4.500M5 10.500h4M7 3v2" stroke="#222" strokeWidth="1.500" fill="none" />
            </svg>
          </button>
          <button type="button" role="tab" aria-selected="false" className="flex h-[21px] w-[122px] items-center gap-1.5 border border-b-0 border-[#7a7a7a] bg-[#d8d8d8] pl-0.5 text-[#616161]">
            <Icon>{stethoscope}</Icon>
            Diagnostics
          </button>
        </div>
        <div className="mb-1.5 ml-[19px] flex items-center gap-1.5">
          <svg className="h-3 w-3" viewBox="0 0 12 12" fill="#fff"><path d="M0 3h8v8H0zM3 0h9v8h-2V2H3z" /></svg>
          <svg className="h-3 w-3" viewBox="0 0 12 12" fill="none" stroke="#fff"><path d="M.5.500h10v11H.5zM0 2h11M2 5.500h7M2 8.500h7" /></svg>
          <svg className="h-3 w-3" viewBox="0 0 12 12" fill="#fff"><path d="M0 3h12L6 9z" /></svg>
        </div>
      </header>
      <div role="tablist" className="flex h-7 shrink-0 items-end gap-px border-t-3 border-b border-t-[#f0f0f0] border-b-[#7a7a7a] bg-[#cbcbcb] pl-1.5">
        <Tab className="w-[101px]">Properties</Tab>
        <Tab className="w-[109px]">Animations</Tab>
        <Tab active className="w-[77px]">Events</Tab>
        <Tab className="w-[68px]">Texts</Tab>
      </div>
      <div className="relative flex min-h-0 flex-1 overflow-hidden bg-[#e9e9e9]">
        <EventList />
        <div className="mt-[3px] flex w-2 shrink-0 flex-col border-t border-r border-l border-[#8a8a8a] bg-[#d8d8d8] pt-[166px]">
          <button type="button" aria-label="Collapse left" className="flex h-6 items-center justify-center border-y border-[#999] bg-[#bdbdbd]">
            <svg className="h-[5px] w-[3px]" viewBox="0 0 3 5"><path d="M3 0v5L0 2.500z" /></svg>
          </button>
          <button type="button" aria-label="Collapse right" className="mt-[10px] flex h-6 items-center justify-center border-y border-[#999] bg-[#bdbdbd]">
            <svg className="h-[5px] w-[3px]" viewBox="0 0 3 5"><path d="M0 0v5l3-2.500z" /></svg>
          </button>
        </div>
        <div className="ml-[10px] flex min-w-0 flex-1 flex-col">
          <div className="flex h-[33px] shrink-0 items-center pb-1">
            <Tool label="Move up" className="w-[14px]"><Icon><path d="M1 13h14v2H1z" fill="#2b55dd" /><path d="M7 4h2v7H7z" fill="#00004a" /><path d="M3 6l5-5 5 5z" fill="#00004a" /></Icon></Tool>
            <Tool label="Move down" className="ml-[10px] w-[14px]"><Icon><path d="M1 2h14v2H1z" fill="#2b55dd" /><path d="M7 5h2v6H7z" fill="#00004a" /><path d="M3 9l5 5 5-5z" fill="#00004a" /></Icon></Tool>
            <div className="ml-1.5 h-6 border-l border-dotted border-[#8a8a8a]" />
            <Tool label="Collapse groups" className="ml-[5px] w-5">
              <Icon>
                <path d="M0 2h6l1 2h8v11H0z" fill="#2036d2" />
                <path d="M1 5h5l1 1h7v2H7L6 7H1zM1 9h4l1 1h8v4H1z" fill="#e6ebff" />
              </Icon>
            </Tool>
            <Tool label="Expand groups" className="ml-1 w-5">
              <Icon>
                <path d="M0 1h5l1 2H0zM0 6h5l1 2H0zM0 11h5l1 2H0z" fill="#3558dd" />
                <path d="M0 3h15v2H0zM0 8h15v2H0zM0 13h15v2H0z" fill="#10189a" />
              </Icon>
            </Tool>
            <div className="ml-[3px] h-6 border-l border-dotted border-[#8a8a8a]" />
            <Tool label="Delete" className="ml-[5px] w-5"><Icon><path d="M2 2l12 12M14 2L2 14" stroke="#1c1c1c" strokeWidth="2.300" /></Icon></Tool>
          </div>
          <FunctionTable />
        </div>
        <Annotation />
      </div>
    </section>
  )
}

export default function App() {
  return (
    <div className="flex h-screen flex-col overflow-hidden bg-[#d3d8d3] pt-px font-['Noto_Sans',sans-serif] text-black">
      <div className="flex min-h-0 flex-1 border-t border-[#1a1e31]">
        <div className="w-[13px] shrink-0 overflow-hidden bg-[#acacac]">
          <div className="h-[25px] border-b border-white bg-[#b1b1b1]" />
          <div className="flex h-[221px] justify-end border-b border-white pt-[70px] pr-[5px]">
            <span className="rotate-180 self-start text-[13px] leading-4 font-semibold text-white [writing-mode:vertical-rl]">Visualization</span>
          </div>
        </div>
        <div className="w-px shrink-0 bg-[#1a1e31]" />
        <ProjectTree />
        <div className="w-[3px] shrink-0 bg-[#1a1e31]" />
        <main className="flex min-w-0 flex-1 flex-col overflow-hidden">
          <ScreenEditor />
          <Inspector />
        </main>
        <div className="w-[3px] shrink-0 bg-[#1a1e31]" />
        <div className="w-px shrink-0 bg-[#f0f0f0]" />
      </div>
    </div>
  )
}
